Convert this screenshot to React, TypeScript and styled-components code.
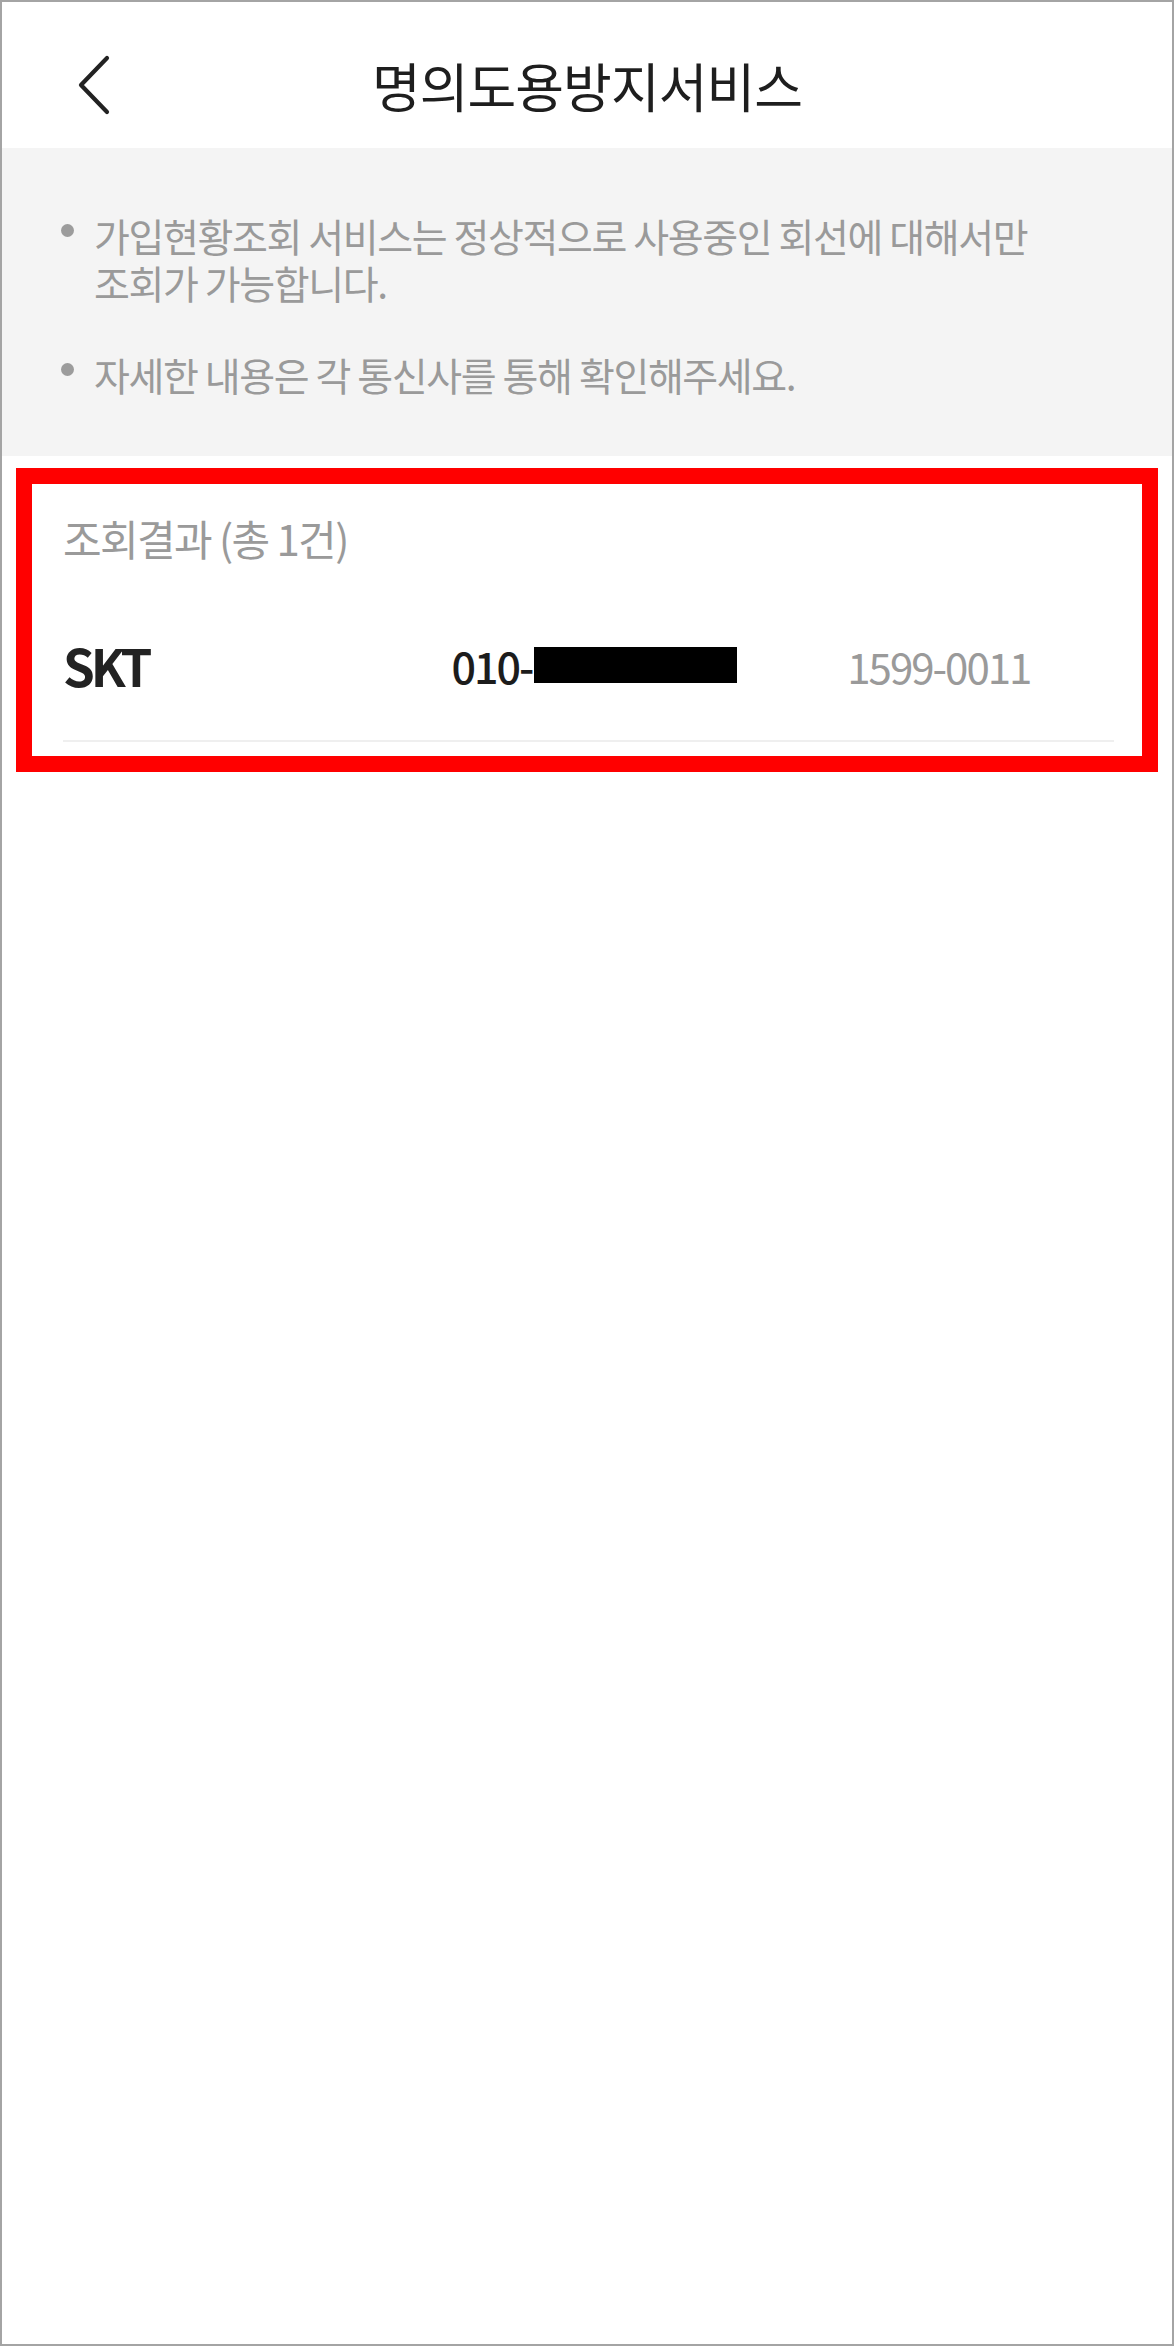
import React from "react";
import styled, { createGlobalStyle } from "styled-components";

const GlobalStyle = createGlobalStyle`
  html, body {
    margin: 0;
    padding: 0;
    background: #ffffff;
  }
  body {
    font-family: "Noto Sans CJK KR", "Noto Sans", sans-serif;
  }
  * { box-sizing: border-box; }
`;

const Frame = styled.div`
  width: 1174px;
  min-height: 2346px;
  border: 2px solid #a4a4a4;
  background: #ffffff;
  display: flex;
  flex-direction: column;
`;

const Header = styled.header`
  height: 146px;
  padding-top: 20px;
  display: grid;
  grid-template-columns: 1fr auto 1fr;
  align-items: center;
`;

const BackButton = styled.button`
  justify-self: start;
  margin-left: 69px;
  width: 44px;
  height: 64px;
  padding: 0;
  border: none;
  background: transparent;
  display: flex;
  align-items: center;
  justify-content: center;
  cursor: pointer;
`;

const Title = styled.h1`
  margin: 0;
  font-size: 53px;
  font-weight: 400;
  letter-spacing: -1px;
  line-height: 60px;
  color: #1e1e1e;
`;

const InfoPanel = styled.section`
  background: #f4f4f4;
  padding: 64px 60px 58px 59px;
  display: flex;
  flex-direction: column;
  gap: 45px;
`;

const InfoItem = styled.div`
  display: flex;
  align-items: flex-start;
  gap: 20px;
  font-size: 39px;
  line-height: 47px;
  letter-spacing: -1.4px;
  color: #9a9a9a;
`;

const Dot = styled.span`
  flex: none;
  width: 13px;
  height: 13px;
  border-radius: 50%;
  background: #9c9c9c;
  margin-top: 12px;
`;

const Highlight = styled.section`
  margin: 12px 14px 0 14px;
  border: 16px solid #ff0000;
  padding: 31px 28px 14px 31px;
`;

const ResultHeading = styled.div`
  font-size: 42px;
  line-height: 46px;
  letter-spacing: -1.6px;
  color: #9a9a9a;
`;

const ResultRow = styled.div`
  margin-top: 64px;
  height: 80px;
  display: grid;
  grid-template-columns: 1fr 1fr 1fr;
  align-items: center;
`;

const Cell = styled.div<{ $align: "left" | "center" }>`
  text-align: ${(p) => p.$align};
  white-space: nowrap;
`;

const Carrier = styled.span`
  font-size: 51px;
  font-weight: 700;
  letter-spacing: -4px;
  color: #222222;
`;

const Number = styled.span`
  font-size: 43px;
  font-weight: 500;
  letter-spacing: -2px;
  color: #1c1c1c;
  display: inline-flex;
  align-items: center;
  margin-left: 12px;
`;

const Redacted = styled.span`
  display: inline-block;
  width: 203px;
  height: 36px;
  background: #000000;
  margin-left: 2px;
`;

const Support = styled.span`
  font-size: 42px;
  font-weight: 400;
  letter-spacing: -2px;
  color: #9a9a9a;
`;

const Divider = styled.hr`
  margin: 35px 0 0 0;
  border: none;
  height: 2px;
  background: #efefef;
`;

const Chevron = () => (
  <svg width="36" height="62" viewBox="0 0 36 62" fill="none">
    <path
      d="M32 4 L6 31 L32 58"
      stroke="#222222"
      strokeWidth="4.2"
      strokeLinecap="round"
      strokeLinejoin="round"
    />
  </svg>
);

export default function App() {
  return (
    <>
      <GlobalStyle />
      <Frame>
        <Header>
          <BackButton aria-label="뒤로">
            <Chevron />
          </BackButton>
          <Title>명의도용방지서비스</Title>
          <span />
        </Header>
        <InfoPanel>
          <InfoItem>
            <Dot />
            <span>
              가입현황조회 서비스는 정상적으로 사용중인 회선에 대해서만
              <br />
              조회가 가능합니다.
            </span>
          </InfoItem>
          <InfoItem>
            <Dot />
            <span>자세한 내용은 각 통신사를 통해 확인해주세요.</span>
          </InfoItem>
        </InfoPanel>
        <Highlight>
          <ResultHeading>조회결과 (총 1건)</ResultHeading>
          <ResultRow>
            <Cell $align="left">
              <Carrier>SKT</Carrier>
            </Cell>
            <Cell $align="center">
              <Number>
                010-
                <Redacted />
              </Number>
            </Cell>
            <Cell $align="center">
              <Support>1599-0011</Support>
            </Cell>
          </ResultRow>
          <Divider />
        </Highlight>
      </Frame>
    </>
  );
}
